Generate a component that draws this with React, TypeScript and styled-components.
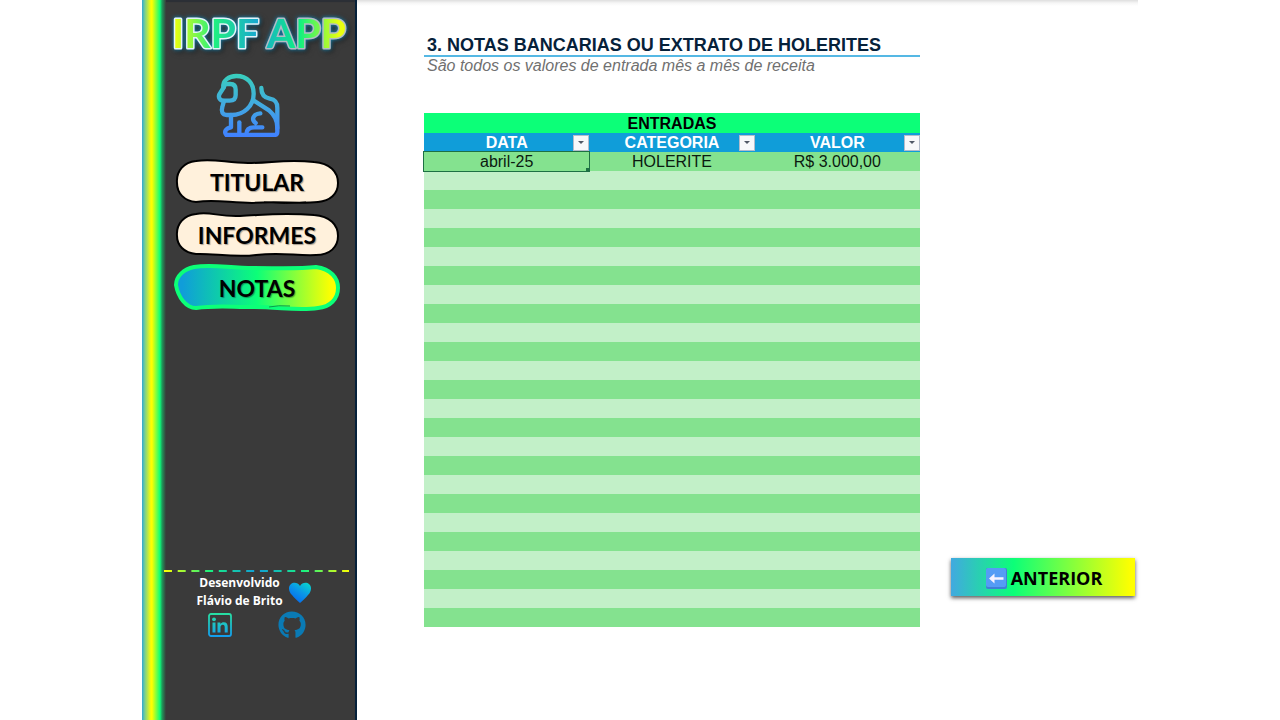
import React from "react";
import styled, { createGlobalStyle, css } from "styled-components";
import { FaGithub } from "react-icons/fa";

const GlobalStyle = createGlobalStyle`
  *, *::before, *::after { box-sizing: border-box; }
  body {
    margin: 0;
    background: #ffffff;
    font-family: "Liberation Sans", Arial, sans-serif;
  }
`;

const Page = styled.div`
  display: flex;
  width: 100%;
  max-width: 996px;
  min-height: 100vh;
  margin: 0 auto;
`;

const Sidebar = styled.aside`
  flex: none;
  display: flex;
  width: 215px;
  background: #3a3a3a;
  border-right: 2px solid #06213a;
  box-shadow: inset 0 2px 1px #2b2f36;
`;

const Stripe = styled.div`
  width: 24px;
  margin-right: -2px;
  background: linear-gradient(
    to right,
    #2fa8d8 0,
    #7cd08a 3px,
    #ffff00 9px,
    #ffff00 10px,
    #0cff78 18px,
    #1f9a5c 20px,
    #3a3a3a 24px
  );
`;

const SidebarBody = styled.div`
  flex: 1;
  display: flex;
  flex-direction: column;
  align-items: center;
  padding: 8px 5px 81px 0;
`;

const Brand = styled.h1`
  display: flex;
  height: 52px;
  margin: 0 0 13px;
  svg {
    overflow: visible;
    filter: drop-shadow(0 0 2px #1590c4) drop-shadow(2px 2px 2px #222222);
  }
`;

const Mascot = styled.div`
  display: flex;
  margin-right: 18px;
`;

const Menu = styled.nav`
  display: flex;
  flex-direction: column;
  gap: 7px;
  margin-top: 22px;
`;

const MenuButton = styled.button`
  position: relative;
  display: flex;
  align-items: center;
  justify-content: center;
  width: 166px;
  height: 46px;
  padding: 0;
  border: 0;
  background: none;
  color: #000000;
  font: 700 23px/28px Lato, Calibri, sans-serif;
  text-shadow: 1px 1px 1px rgba(0, 0, 0, 0.35);
  cursor: pointer;
  svg {
    position: absolute;
    inset: 0;
    overflow: visible;
  }
  span {
    position: relative;
  }
`;

const Credits = styled.footer`
  display: flex;
  flex-direction: column;
  align-items: center;
  align-self: stretch;
  margin-top: auto;
  color: #ffffff;
  font: 700 12px/18px "Open Sans", Calibri, sans-serif;
  text-align: center;
`;

const Author = styled.div`
  display: flex;
  align-items: center;
  gap: 5px;
  margin: 2px 6px 0 0;
  p {
    margin: 0;
  }
  svg {
    margin-top: 2px;
  }
`;

const Social = styled.div`
  display: flex;
  align-items: center;
  gap: 46px;
  margin-top: 1px;
  a {
    display: flex;
    color: #0a7ab4;
  }
`;

const Main = styled.main`
  flex: 1;
  display: grid;
  grid-template-columns: minmax(0, 1fr) 184px;
  align-content: start;
  column-gap: 31px;
  padding: 34px 3px 32px 67px;
  background: linear-gradient(to bottom, #dedede 0, #f6f6f6 3px, #ffffff 6px);
`;

const Heading = styled.h2`
  margin: 0;
  padding: 1px 0 0 3px;
  border-bottom: 2px solid #55b8e4;
  color: #06213a;
  font-size: 18px;
  line-height: 20px;
`;

const Lead = styled.p`
  margin: 0 0 38px;
  padding-left: 3px;
  color: #707070;
  font-size: 16px;
  font-style: italic;
  line-height: 18px;
`;

const Table = styled.table`
  width: 100%;
  border-collapse: collapse;
  table-layout: fixed;
  color: #0b1a10;
  font-size: 16px;
  line-height: 19px;
  text-align: center;
  th,
  td {
    height: 19px;
    padding: 0;
  }
`;

const TitleCell = styled.th`
  && {
    height: 20px;
  }
  background: #0cff78;
  color: #000000;
`;

const HeadCell = styled.th`
  background: #109dd9;
  color: #ffffff;
  div {
    display: grid;
    grid-template-columns: 16px 1fr 16px;
    align-items: center;
  }
`;

const FilterButton = styled.button`
  grid-column: 3;
  display: flex;
  align-items: center;
  justify-content: center;
  width: 16px;
  height: 16px;
  padding: 0;
  border: 1px solid #b4bccb;
  background: #f7f8fa;
  cursor: pointer;
`;

const HeadLabel = styled.span`
  grid-column: 2;
`;

const Row = styled.tr`
  background: #c2f0c8;
  &:nth-child(odd) {
    background: #84e28f;
  }
`;

const Cell = styled.td<{ $selected?: boolean }>`
  ${(p) =>
    p.$selected &&
    css`
      position: relative;
      outline: 1px solid #1d7044;
      &::after {
        content: "";
        position: absolute;
        right: -1px;
        bottom: -1px;
        width: 4px;
        height: 4px;
        background: #1d7044;
      }
    `}
`;

const Pager = styled.div`
  align-self: end;
  padding-bottom: 31px;
`;

const PrevButton = styled.button`
  display: flex;
  align-items: center;
  justify-content: center;
  gap: 4px;
  width: 100%;
  height: 38px;
  padding: 2px 0 0 2px;
  border: 0;
  background: linear-gradient(to right, #41a9e0 0%, #0cff78 34%, #ffff00 98%);
  box-shadow: 0 2px 4px rgba(0, 0, 0, 0.65);
  color: #000000;
  font: 700 18px/24px "Open Sans", "Segoe UI", sans-serif;
  cursor: pointer;
`;

function Lion() {
  return (
    <svg width="64" height="64" viewBox="33 24 192 192" fill="none" role="img" aria-label="Leão">
      <defs>
        <linearGradient id="lion" gradientUnits="userSpaceOnUse" x1="0" y1="24" x2="0" y2="216">
          <stop offset="0" stopColor="#38d0bc" />
          <stop offset="0.5" stopColor="#42aae0" />
          <stop offset="1" stopColor="#4080ff" />
        </linearGradient>
      </defs>
      <g stroke="url(#lion)" strokeWidth="13" strokeLinecap="round" strokeLinejoin="round">
        <path d="M55 68C52 46 72 33 94 33C128 33 146 56 146 86C146 123 116 150 80 150H65C52 150 48 139 52 126L57 108" />
        <path d="M57 66L43 88C39 98 45 107 56 107H74C87 107 92 100 92 90V74C92 62 86 57 76 57H66C60 57 57 60 57 66Z" />
        <path d="M145 106L192 136C209 150 217 169 217 188V200C217 207 213 210 207 210H64C56 200 63 189 78 187V150" />
        <path d="M169 69C169 88 178 98 194 101C212 104 217 113 217 129V190" />
        <path d="M103 172V206" />
        <path d="M166 145C144 147 138 164 152 174M172 187H148C132 187 124 195 124 208" />
      </g>
    </svg>
  );
}

function Heart() {
  return (
    <svg width="24" height="22" viewBox="0 0 24 22" aria-hidden="true">
      <defs>
        <linearGradient id="heart" x1="1" y1="0" x2="0.3" y2="1">
          <stop offset="0" stopColor="#08dcc8" />
          <stop offset="0.55" stopColor="#0a94e8" />
          <stop offset="1" stopColor="#0668ee" />
        </linearGradient>
      </defs>
      <path
        fill="url(#heart)"
        d="M12 4C10 0 5 0 3 2C-0.500 5 1 10 4 13C6 16 9 18 12 21C15 18 18 16 20 13C23 10 24.500 5 21 2C19 0 14 0 12 4Z"
      />
    </svg>
  );
}

function LinkedIn() {
  return (
    <svg width="24" height="24" viewBox="0 0 24 24" fill="none" role="img" aria-label="LinkedIn">
      <defs>
        <linearGradient id="linkedin" gradientUnits="userSpaceOnUse" x1="0" y1="0" x2="0" y2="24">
          <stop offset="0" stopColor="#28e0a0" />
          <stop offset="1" stopColor="#129cf0" />
        </linearGradient>
      </defs>
      <rect x="1" y="1" width="22" height="22" rx="2" stroke="url(#linkedin)" strokeWidth="1.800" />
      <circle cx="6" cy="6.300" r="1.900" fill="url(#linkedin)" />
      <path
        fill="url(#linkedin)"
        d="M4.500 9.500H7.500V19.500H4.500ZM9.500 9.500H12.400V11C13.200 9.800 14.300 9.200 15.800 9.200C18.600 9.200 19.700 11 19.700 13.700V19.500H16.700V14.300C16.700 12.700 16.200 11.800 14.900 11.800C13.400 11.800 12.500 12.800 12.500 14.500V19.500H9.500Z"
      />
    </svg>
  );
}

const creamShapes = [
  "M22 2C40 -1 52 4 74 4C98 4 112 0 140 3C156 4 164 13 164 24C164 35 156 42 144 43C124 45 104 42 78 44C56 44 42 40 22 43C10 42 3 34 3 24C2 12 10 3 22 2Z",
  "M22 2C36 -1 44 5 66 4C90 3 106 0 140 3C156 4 164 13 164 24C164 35 156 43 142 43C122 44 108 40 82 43C60 46 38 41 22 42C10 41 3 33 3 24C2 12 10 3 22 2Z",
];

function CreamShape({ variant }: { variant: number }) {
  return (
    <svg width="166" height="46" viewBox="0 0 166 46" aria-hidden="true">
      <path d={creamShapes[variant]} fill="#fff1dc" stroke="#000000" strokeWidth="2" />
      {variant === 0 && <path d="M90 43Q112 46 132 43" fill="none" stroke="#000000" />}
    </svg>
  );
}

function ActiveShape() {
  return (
    <svg width="166" height="46" viewBox="0 0 166 46" aria-hidden="true">
      <defs>
        <linearGradient id="active">
          <stop offset="0.040" stopColor="#109dd9" />
          <stop offset="0.500" stopColor="#0cff78" />
          <stop offset="0.960" stopColor="#ffff00" />
        </linearGradient>
      </defs>
      <path
        d="M20 2C38 -1 54 3 80 3C104 3 124 4 142 2C157 4 164 13 164 23C164 34 156 42 144 43C124 46 106 42 80 42C56 42 42 40 22 43C12 43 4 32 2 20C2 11 10 4 20 2Z"
        fill="url(#active)"
        stroke="#0cff78"
        strokeWidth="4"
      />
      <path d="M95 42Q104 40 116 41" fill="none" stroke="#0a9a4c" />
    </svg>
  );
}

function BackArrow() {
  return (
    <svg width="21" height="21" viewBox="0 0 21 21" aria-hidden="true">
      <rect width="21" height="21" rx="2" fill="#3f7fd6" />
      <rect width="20" height="19" rx="2" fill="#559cf5" />
      <path d="M3 10.500L8.500 5.500V9.200H17.500V11.800H8.500V15.500Z" fill="#f6f2ff" />
    </svg>
  );
}

const columns = ["DATA", "CATEGORIA", "VALOR"];
const entries = [["abril-25", "HOLERITE", "R$ 3.000,00"]];
const rows = Array.from({ length: 25 }, (_, i) => entries[i] ?? ["", "", ""]);

export default function App() {
  return (
    <>
      <GlobalStyle />
      <Page>
        <Sidebar>
          <Stripe />
          <SidebarBody>
            <Brand>
              <svg width="178" height="52" viewBox="0 0 178 52">
                <defs>
                  <linearGradient id="brand" gradientUnits="userSpaceOnUse" x1="0" y1="0" x2="178" y2="0">
                    <stop offset="0.040" stopColor="#e8ff10" />
                    <stop offset="0.260" stopColor="#20f080" />
                    <stop offset="0.500" stopColor="#18a8d0" />
                    <stop offset="0.740" stopColor="#10f080" />
                    <stop offset="0.960" stopColor="#e8ff10" />
                  </linearGradient>
                  <linearGradient id="brandEdge" gradientUnits="userSpaceOnUse" x1="0" y1="0" x2="178" y2="0">
                    <stop offset="0.500" stopColor="#e4f4fa" />
                    <stop offset="0.540" stopColor="#b4bcc4" />
                  </linearGradient>
                </defs>
                <text
                  x="91"
                  y="40"
                  textAnchor="middle"
                  fontFamily="Lato, Calibri, sans-serif"
                  fontWeight="700"
                  fontSize="41"
                  fill="url(#brand)"
                  stroke="url(#brandEdge)"
                  strokeWidth="3"
                  strokeLinejoin="round"
                  paintOrder="stroke"
                >
                  IRPF APP
                </text>
              </svg>
            </Brand>
            <Mascot>
              <Lion />
            </Mascot>
            <Menu>
              <MenuButton type="button">
                <CreamShape variant={0} />
                <span>TITULAR</span>
              </MenuButton>
              <MenuButton type="button">
                <CreamShape variant={1} />
                <span>INFORMES</span>
              </MenuButton>
              <MenuButton type="button" aria-current="page">
                <ActiveShape />
                <span>NOTAS</span>
              </MenuButton>
            </Menu>
            <Credits>
              <svg width="186" height="2" viewBox="0 0 186 2" aria-hidden="true">
                <defs>
                  <linearGradient id="rule" gradientUnits="userSpaceOnUse" x1="0" y1="0" x2="186" y2="0">
                    <stop offset="0" stopColor="#ffff00" />
                    <stop offset="0.250" stopColor="#18f080" />
                    <stop offset="0.500" stopColor="#109dd9" />
                    <stop offset="0.750" stopColor="#18f080" />
                    <stop offset="1" stopColor="#ffff00" />
                  </linearGradient>
                </defs>
                <path d="M0 1H185" stroke="url(#rule)" strokeWidth="2" strokeDasharray="8 5.700" />
              </svg>
              <Author>
                <p>
                  Desenvolvido
                  <br />
                  Flávio de Brito
                </p>
                <Heart />
              </Author>
              <Social>
                <a href="#linkedin">
                  <LinkedIn />
                </a>
                <a href="#github" aria-label="GitHub">
                  <FaGithub size={28} />
                </a>
              </Social>
            </Credits>
          </SidebarBody>
        </Sidebar>
        <Main>
          <section>
            <Heading>3. NOTAS BANCARIAS OU EXTRATO DE HOLERITES</Heading>
            <Lead>São todos os valores de entrada mês a mês de receita</Lead>
            <Table>
              <thead>
                <tr>
                  <TitleCell colSpan={3}>ENTRADAS</TitleCell>
                </tr>
                <tr>
                  {columns.map((name) => (
                    <HeadCell key={name} scope="col">
                      <div>
                        <HeadLabel>{name}</HeadLabel>
                        <FilterButton type="button" aria-label={`Filtrar ${name}`}>
                          <svg width="6" height="3" viewBox="0 0 6 3" aria-hidden="true">
                            <path d="M0 0H6L3 3Z" fill="#505866" />
                          </svg>
                        </FilterButton>
                      </div>
                    </HeadCell>
                  ))}
                </tr>
              </thead>
              <tbody>
                {rows.map((row, r) => (
                  <Row key={r}>
                    {row.map((value, c) => (
                      <Cell key={c} $selected={r === 0 && c === 0}>
                        {value}
                      </Cell>
                    ))}
                  </Row>
                ))}
              </tbody>
            </Table>
          </section>
          <Pager>
            <PrevButton type="button">
              <BackArrow />
              ANTERIOR
            </PrevButton>
          </Pager>
        </Main>
      </Page>
    </>
  );
}
